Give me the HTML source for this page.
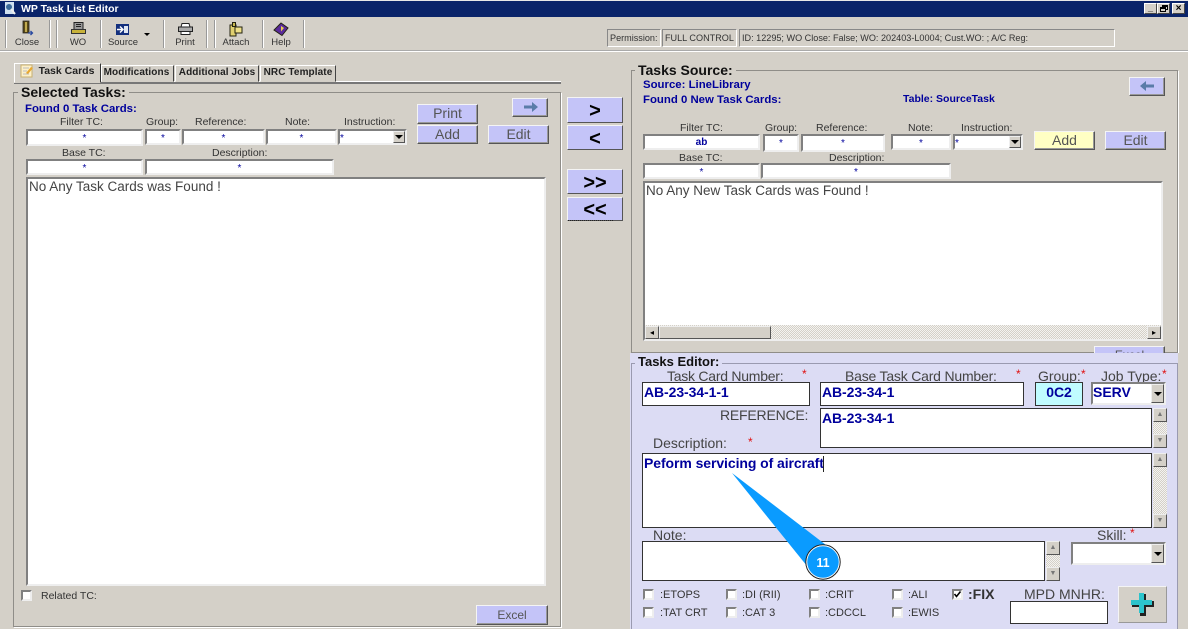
<!DOCTYPE html>
<html><head><meta charset="utf-8"><title>WP Task List Editor</title>
<style>
html,body{margin:0;padding:0;width:1188px;height:629px;overflow:hidden;background:#d4d0c8;font-family:"Liberation Sans",sans-serif;color:#222}
div,span{position:absolute;box-sizing:border-box}
svg{position:absolute;overflow:visible}
.l{font-size:10.5px;white-space:nowrap;color:#333;line-height:12px}
.L{font-size:14px;white-space:nowrap;color:#444;line-height:14px}
.in{background:#fff;border:2px solid;border-color:#808080 #eee #eee #808080;color:#00009c;font-size:10px;text-align:center;line-height:15px;white-space:nowrap}
.b{background:#fff;border:1px solid #333;color:#00009c;font-weight:bold;font-size:14px;line-height:19px;padding-left:1px;white-space:nowrap;letter-spacing:-.08px}
.btn{background:#c4c4f8;border:1px solid;border-color:#f4f4f4 #555 #555 #f4f4f4;box-shadow:inset -1px -1px 0 #999;color:#555;font-size:14px;text-align:center;line-height:17px}
.c{background:#c4c4f8;border:1px solid;border-color:#f4f4f4 #555 #555 #f4f4f4;color:#000;font-weight:bold;font-size:20px;text-align:center;line-height:26px}
.h{font-weight:bold;font-size:14px;color:#111;white-space:nowrap;background:#d4d0c8;padding:0 3px;line-height:14px}
.blue{font-weight:bold;font-size:11.4px;color:#00009c;white-space:nowrap;line-height:12px}
.tb{font-size:9.5px;color:#333;white-space:nowrap;line-height:11px;text-align:center}
.sep{width:2px;top:20px;height:28px;border-left:1px solid #999;border-right:1px solid #fff}
.tab{background:#d4d0c8;border:1px solid;border-color:#fff #444 transparent #fff;font-weight:bold;font-size:10px;color:#222;text-align:center;white-space:nowrap;line-height:14px}
.sb{background:#d4d0c8;border:1px solid;border-color:#eee #555 #555 #eee;font-size:7px;line-height:12px;text-align:center;color:#777}
.dd{background:#d4d0c8;border:1px solid;border-color:#eee #555 #555 #eee}
.dd:after{content:"";position:absolute;left:50%;top:50%;margin:-2px 0 0 -4px;border:4px solid transparent;border-top-color:#000;border-bottom:0}
.st{background:repeating-conic-gradient(#d4d0c8 0 25%,#f4f3f0 0 50%) 0 0/2px 2px}
.ck{width:11px;height:11px;background:#fff;border:2px solid;border-color:#808080 #eee #eee #808080}
.stat{border:1px solid;border-color:#888 #fff #fff #888;font-size:9.1px;color:#333;line-height:16px;padding-left:2px;white-space:nowrap}
.grp{border:1px solid #8f8d88;box-shadow:1px 1px 0 #fff}
.r{color:#e01010;font-size:12px;line-height:12px}
</style></head><body>

<!-- title bar -->
<div style="left:0;top:0;width:1188px;height:17px;background:#0a246a;border-top:1px solid #e8e8e8"></div>
<svg style="left:4px;top:2px" width="12" height="13" viewBox="0 0 12 13"><rect x="1" y="0" width="9" height="12" fill="#cfe0f0"/><circle cx="5" cy="5" r="3" fill="#3a6a9a"/><path d="M7 7l4 5" stroke="#eee" stroke-width="2"/></svg>
<div style="left:21px;top:3px;color:#fff;font-weight:bold;font-size:10.5px;line-height:12px;white-space:nowrap">WP Task List Editor</div>
<div style="left:1144px;top:3px;width:13px;height:11px;background:#d4d0c8;border:1px solid;border-color:#fff #444 #444 #fff;font-size:9px;line-height:9px;text-align:center;font-weight:bold;color:#000">_</div>
<div style="left:1157px;top:3px;width:13px;height:11px;background:#d4d0c8;border:1px solid;border-color:#fff #444 #444 #fff"><span style="left:4px;top:1px;width:6px;height:5px;border:1px solid #000;border-top-width:2px"></span><span style="left:2px;top:3px;width:6px;height:5px;border:1px solid #000;border-top-width:2px;background:#d4d0c8"></span></div>
<div style="left:1172px;top:3px;width:13px;height:11px;background:#d4d0c8;border:1px solid;border-color:#fff #444 #444 #fff;font-size:10px;line-height:9px;text-align:center;font-weight:bold;color:#000">×</div>

<!-- toolbar -->
<div style="left:0;top:50px;width:1188px;height:2px;border-top:1px solid #aaa;border-bottom:1px solid #fff"></div>
<div class="sep" style="left:5px"></div><div class="sep" style="left:49px"></div><div class="sep" style="left:56px"></div><div class="sep" style="left:100px"></div><div class="sep" style="left:163px"></div><div class="sep" style="left:206px"></div><div class="sep" style="left:214px"></div><div class="sep" style="left:262px"></div><div class="sep" style="left:303px"></div>

<svg style="left:22px;top:21px" width="12" height="15" viewBox="0 0 12 15"><path d="M1 0h6v12H1z" fill="#5a4a18" stroke="#222" stroke-width=".8"/><path d="M3 1h2v10H3z" fill="#c0aa50"/><path d="M6 12h4m-1.500-2l2 2-2 2" fill="none" stroke="#2a4aa0" stroke-width="1.300"/></svg>
<div class="tb" style="left:12px;top:37px;width:30px">Close</div>
<svg style="left:71px;top:22px" width="15" height="12" viewBox="0 0 15 12"><path d="M3 .5h9v7H3z" fill="#999" stroke="#222"/><path d="M5 2.500h5M5 4.500h5" stroke="#222"/><path d="M.5 7.500h14v4H.5z" fill="#c8b23a" stroke="#333"/></svg>
<div class="tb" style="left:63px;top:37px;width:30px">WO</div>
<svg style="left:116px;top:24px" width="13" height="11" viewBox="0 0 13 11"><path d="M0 0h13v11H0z" fill="#14307e"/><path d="M8 2h4v7H8z" fill="#dfe6f2"/><path d="M1 5.500h5m-2-3l3 3-3 3" fill="none" stroke="#fff" stroke-width="1.400"/></svg>
<div class="tb" style="left:104px;top:37px;width:38px">Source</div>
<div style="left:144px;top:33px;border:3px solid transparent;border-top-color:#000;border-bottom:0"></div>
<svg style="left:178px;top:23px" width="15" height="12" viewBox="0 0 15 12"><path d="M4 .5h7l1 3.500H3z" fill="#fff" stroke="#222"/><path d="M.5 4h14v4.500H.5z" fill="#aaa" stroke="#222"/><path d="M3 8.500h9v3H3z" fill="#fff" stroke="#222"/></svg>
<div class="tb" style="left:170px;top:37px;width:30px">Print</div>
<svg style="left:229px;top:22px" width="14" height="15" viewBox="0 0 14 15"><path d="M1 3h6v11H1z" fill="#e0d070" stroke="#221"/><path d="M6 5h7v6H6z" fill="#efe088" stroke="#221"/><path d="M3.500.5h3v4h-3z" fill="#c8b850" stroke="#221"/></svg>
<div class="tb" style="left:219px;top:37px;width:34px">Attach</div>
<svg style="left:274px;top:23px" width="14" height="13" viewBox="0 0 14 13"><path d="M7 0l7 5-6 7.500L0 7z" fill="#5a2a9a" stroke="#221"/><path d="M7 3l3 2-3 3.500z" fill="#e8d050"/></svg>
<div class="tb" style="left:266px;top:37px;width:30px">Help</div>

<!-- status -->
<div class="stat" style="left:607px;top:29px;width:54px;height:18px">Permission:</div>
<div class="stat" style="left:662px;top:29px;width:75px;height:18px">FULL CONTROL</div>
<div class="stat" style="left:739px;top:29px;width:376px;height:18px">ID: 12295; WO Close: False; WO: 202403-L0004; Cust.WO: ; A/C Reg:</div>

<!-- tabs -->
<div style="left:14px;top:81px;width:547px;height:3px;border-top:1px solid #fff;border-bottom:2px solid #777"></div>
<div class="tab" style="left:14px;top:63px;width:87px;height:20px;line-height:15px;padding-left:18px;border-right-color:#333;font-size:10.500px">Task Cards</div>
<svg style="left:20px;top:64px" width="14" height="14" viewBox="0 0 14 14"><path d="M1 1h11v12H1z" fill="#fdf0c8" stroke="#c8b070"/><path d="M3 4h6M3 7h4M3 10h6" stroke="#bbb"/><path d="M6 9l5-6 2 1-5 6z" fill="#e8a830"/></svg>
<div class="tab" style="left:101px;top:65px;width:73px;height:17px;padding:0 2px 0 0;letter-spacing:.1px">Modifications</div>
<div class="tab" style="left:175px;top:65px;width:84px;height:17px;letter-spacing:.1px">Additional Jobs</div>
<div class="tab" style="left:260px;top:65px;width:76px;height:17px;letter-spacing:.1px">NRC Template</div>

<!-- selected tasks -->
<div class="grp" style="left:13px;top:92px;width:548px;height:535px"></div>
<div class="h" style="left:18px;top:85px">Selected Tasks:</div>
<div class="blue" style="left:25px;top:103px">Found 0 Task Cards:</div>
<div class="l" style="left:60px;top:116px">Filter TC:</div>
<div class="l" style="left:146px;top:116px">Group:</div>
<div class="l" style="left:195px;top:116px">Reference:</div>
<div class="l" style="left:285px;top:116px">Note:</div>
<div class="l" style="left:344px;top:116px">Instruction:</div>
<div class="in" style="left:26px;top:129px;width:117px;height:17px">*</div>
<div class="in" style="left:145px;top:129px;width:36px;height:16px">*</div>
<div class="in" style="left:182px;top:129px;width:83px;height:16px">*</div>
<div class="in" style="left:266px;top:129px;width:71px;height:16px">*</div>
<div class="in" style="left:338px;top:129px;width:69px;height:16px;text-align:left">*<span class="dd" style="right:0;top:0;width:12px;height:12px"></span></div>
<div class="l" style="left:62px;top:147px">Base TC:</div>
<div class="l" style="left:212px;top:147px">Description:</div>
<div class="in" style="left:26px;top:159px;width:117px;height:16px">*</div>
<div class="in" style="left:145px;top:159px;width:189px;height:16px">*</div>
<div class="in" style="left:26px;top:177px;width:520px;height:409px;color:#444;font-size:13.500px;text-align:left;padding-left:1px;line-height:15px">No Any Task Cards was Found !</div>
<div class="ck" style="left:21px;top:590px"></div>
<div class="l" style="left:41px;top:590px">Related TC:</div>
<div class="btn" style="left:476px;top:605px;width:72px;height:20px;font-size:12px;line-height:19px">Excel</div>

<div class="btn" style="left:417px;top:104px;width:61px;height:20px">Print</div>
<div class="btn" style="left:417px;top:125px;width:61px;height:19px">Add</div>
<div class="btn" style="left:488px;top:125px;width:61px;height:19px">Edit</div>
<div class="btn" style="left:512px;top:98px;width:36px;height:19px"></div>
<svg style="left:524px;top:102px" width="14" height="10" viewBox="0 0 14 10"><path d="M0 3.500h8V0l6 5-6 5V6.500H0z" fill="#5a7ca8"/></svg>

<!-- center buttons -->
<div class="c" style="left:567px;top:97px;width:56px;height:26px">&gt;</div>
<div class="c" style="left:567px;top:125px;width:56px;height:25px">&lt;</div>
<div class="c" style="left:567px;top:169px;width:56px;height:25px">&gt;&gt;</div>
<div class="c" style="left:567px;top:197px;width:56px;height:24px;line-height:24px">&lt;&lt;</div>
<div style="left:568px;top:220px;width:45px;height:1px;border-top:1px dotted #222"></div>

<!-- tasks source -->
<div class="grp" style="left:631px;top:70px;width:547px;height:283px"></div>
<div class="h" style="left:635px;top:63px">Tasks Source:</div>
<div class="blue" style="left:643px;top:79px">Source: LineLibrary</div>
<div class="blue" style="left:643px;top:94px">Found 0 New Task Cards:</div>
<div class="blue" style="left:903px;top:93px;font-size:10.500px">Table: SourceTask</div>
<div class="btn" style="left:1129px;top:77px;width:36px;height:19px"></div>
<svg style="left:1140px;top:81px" width="14" height="10" viewBox="0 0 14 10"><path d="M14 3.500H6V0L0 5l6 5V6.500h8z" fill="#5a7ca8"/></svg>
<div class="l" style="left:680px;top:122px">Filter TC:</div>
<div class="l" style="left:765px;top:122px">Group:</div>
<div class="l" style="left:816px;top:122px">Reference:</div>
<div class="l" style="left:908px;top:122px">Note:</div>
<div class="l" style="left:961px;top:122px">Instruction:</div>
<div class="in" style="left:643px;top:134px;width:117px;height:16px;font-weight:bold;line-height:13px">ab</div>
<div class="in" style="left:763px;top:134px;width:36px;height:18px">*</div>
<div class="in" style="left:801px;top:134px;width:84px;height:18px">*</div>
<div class="in" style="left:891px;top:134px;width:60px;height:16px">*</div>
<div class="in" style="left:953px;top:134px;width:70px;height:16px;text-align:left">*<span class="dd" style="right:0;top:0;width:12px;height:12px"></span></div>
<div class="btn" style="left:1034px;top:131px;width:61px;height:19px;background:#ffffc4">Add</div>
<div class="btn" style="left:1105px;top:131px;width:61px;height:19px">Edit</div>
<div class="l" style="left:679px;top:152px">Base TC:</div>
<div class="l" style="left:829px;top:152px">Description:</div>
<div class="in" style="left:643px;top:163px;width:117px;height:16px">*</div>
<div class="in" style="left:761px;top:163px;width:190px;height:16px">*</div>
<div class="in" style="left:643px;top:181px;width:520px;height:160px;color:#444;font-size:13.500px;text-align:left;padding-left:1px;line-height:16px">No Any New Task Cards was Found !</div>
<div class="st" style="left:645px;top:325px;width:516px;height:14px"></div>
<div class="sb" style="left:645px;top:326px;width:14px;height:13px;font-size:8px;color:#000">◂</div>
<div style="left:659px;top:326px;width:112px;height:13px;background:#d4d0c8;border:1px solid;border-color:#eee #555 #555 #eee"></div>
<div class="sb" style="left:1147px;top:326px;width:14px;height:13px;font-size:8px;color:#000">▸</div>
<div class="btn" style="left:1094px;top:346px;width:71px;height:20px;font-size:12px">Excel</div>

<!-- tasks editor -->
<div style="left:630px;top:353px;width:548px;height:276px;background:#dcdcf4"></div>
<div style="left:631px;top:363px;width:547px;height:266px;border:1px solid #9a9ab0;border-bottom:0"></div>
<div style="left:1178px;top:353px;width:10px;height:276px;background:#d4d0c8"></div>
<div class="h" style="left:635px;top:355px;background:#dcdcf4;font-size:13px">Tasks Editor:</div>
<div class="L" style="left:667px;top:369px;letter-spacing:-.25px">Task Card Number:</div><div class="r" style="left:802px;top:368px">*</div>
<div class="L" style="left:845px;top:369px;letter-spacing:-.2px">Base Task Card Number:</div><div class="r" style="left:1016px;top:368px">*</div>
<div class="L" style="left:1038px;top:369px">Group:</div><div class="r" style="left:1081px;top:368px">*</div>
<div class="L" style="left:1101px;top:369px">Job Type:</div><div class="r" style="left:1162px;top:368px">*</div>
<div class="b" style="left:642px;top:382px;width:168px;height:24px">AB-23-34-1-1</div>
<div class="b" style="left:820px;top:382px;width:204px;height:24px">AB-23-34-1</div>
<div class="b" style="left:1035px;top:382px;width:48px;height:24px;background:#c0fcff;text-align:center;padding:0">0C2</div>
<div class="in" style="left:1091px;top:382px;width:75px;height:23px;font-weight:bold;font-size:14px;text-align:left;line-height:16px">SERV<span class="dd" style="right:0;top:0;width:13px;height:19px"></span></div>
<div class="L" style="left:720px;top:408px;letter-spacing:-.2px">REFERENCE:</div>
<div class="L" style="left:653px;top:436px">Description:</div><div class="r" style="left:748px;top:436px">*</div>
<div class="b" style="left:820px;top:408px;width:332px;height:40px">AB-23-34-1</div>
<div class="st" style="left:1153px;top:408px;width:14px;height:40px"></div>
<div class="sb" style="left:1153px;top:408px;width:14px;height:14px">▲</div><div class="sb" style="left:1153px;top:434px;width:14px;height:14px">▼</div>
<div class="b" style="left:642px;top:453px;width:510px;height:75px">Peform servicing of aircraft<span style="left:180px;top:2px;width:1px;height:16px;background:#222"></span></div>
<div class="st" style="left:1153px;top:453px;width:14px;height:75px"></div>
<div class="sb" style="left:1153px;top:453px;width:14px;height:14px">▲</div><div class="sb" style="left:1153px;top:514px;width:14px;height:14px">▼</div>
<div class="L" style="left:653px;top:528px">Note:</div>
<div class="L" style="left:1097px;top:528px">Skill:</div><div class="r" style="left:1130px;top:527px">*</div>
<div class="b" style="left:642px;top:541px;width:403px;height:40px"></div>
<div class="st" style="left:1046px;top:541px;width:14px;height:40px"></div>
<div class="sb" style="left:1046px;top:541px;width:14px;height:14px">▲</div><div class="sb" style="left:1046px;top:567px;width:14px;height:14px">▼</div>
<div class="in" style="left:1071px;top:542px;width:95px;height:23px"><span class="dd" style="right:0;top:0;width:13px;height:19px"></span></div>

<div class="ck" style="left:643px;top:589px"></div><div class="l" style="left:660px;top:589px;font-size:11px">:ETOPS</div>
<div class="ck" style="left:726px;top:589px"></div><div class="l" style="left:742px;top:589px;font-size:11px">:DI (RII)</div>
<div class="ck" style="left:809px;top:589px"></div><div class="l" style="left:825px;top:589px;font-size:11px">:CRIT</div>
<div class="ck" style="left:892px;top:589px"></div><div class="l" style="left:908px;top:589px;font-size:11px">:ALI</div>
<div class="ck" style="left:952px;top:589px"></div>
<svg style="left:953px;top:590px" width="9" height="9" viewBox="0 0 9 9"><path d="M1.500 4l2 2.500 4-5" fill="none" stroke="#000" stroke-width="1.600"/></svg>
<div class="l" style="left:968px;top:587px;font-weight:bold;font-size:14px;line-height:15px">:FIX</div>
<div class="ck" style="left:643px;top:607px"></div><div class="l" style="left:660px;top:607px;font-size:11px">:TAT CRT</div>
<div class="ck" style="left:726px;top:607px"></div><div class="l" style="left:742px;top:607px;font-size:11px">:CAT 3</div>
<div class="ck" style="left:809px;top:607px"></div><div class="l" style="left:825px;top:607px;font-size:11px">:CDCCL</div>
<div class="ck" style="left:892px;top:607px"></div><div class="l" style="left:908px;top:607px;font-size:11px">:EWIS</div>
<div class="L" style="left:1024px;top:587px">MPD MNHR:</div>
<div class="b" style="left:1010px;top:601px;width:98px;height:23px"></div>
<div style="left:1118px;top:586px;width:49px;height:37px;background:#d4d0c8;border:1px solid;border-color:#f4f4f4 #999 #999 #f4f4f4"></div>
<svg style="left:1130px;top:592px" width="24" height="24" viewBox="0 0 24 24"><path d="M9 1h6v7h8v6h-8v9H9v-9H1V8h8z" fill="#222" transform="translate(1 1)"/><path d="M9 1h5v7h8v5h-8v8H9v-8H1V8h8z" fill="#2cc4cc"/></svg>

<!-- callout -->
<svg style="left:0;top:0" width="1188" height="629" viewBox="0 0 1188 629">
<path d="M732 473L826 545 807 566z" fill="#0a9bff"/>
<circle cx="823" cy="562" r="16.500" fill="#0a9bff" stroke="#fff" stroke-width="1.500"/>
<circle cx="823" cy="562" r="17.200" fill="none" stroke="#222" stroke-width="1"/>
<text x="823" y="567" fill="#fff" font-family="Liberation Sans" font-weight="bold" font-size="12.500" text-anchor="middle">11</text>
</svg>
</body></html>
